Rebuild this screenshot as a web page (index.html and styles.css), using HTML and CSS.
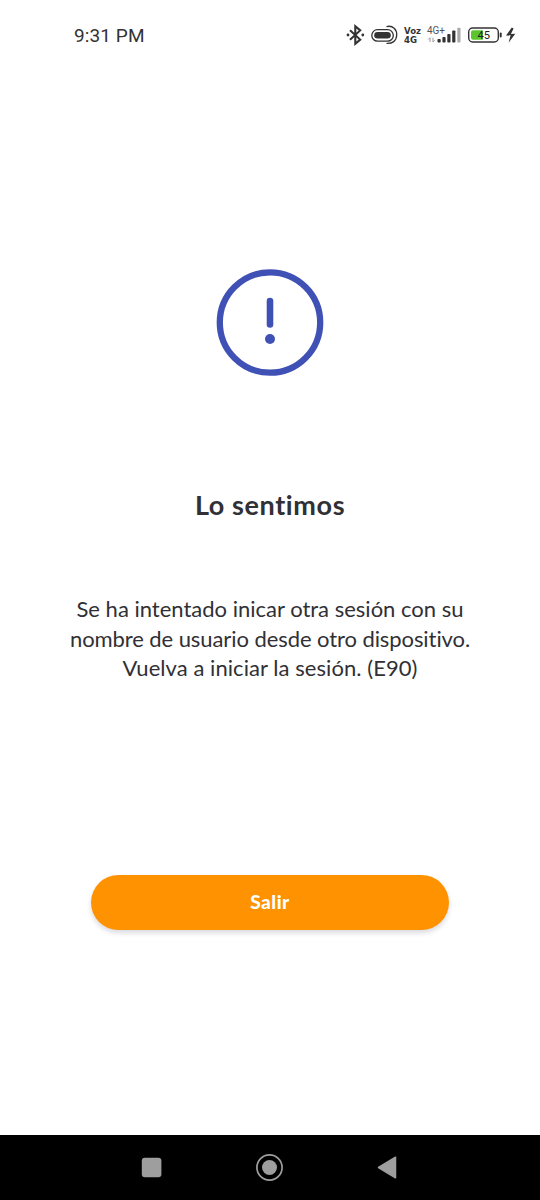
FILE: index.html
```html
<!DOCTYPE html>
<html lang="es">
<head>
<meta charset="utf-8">
<title>Lo sentimos</title>
<link rel="stylesheet" href="styles.css">
</head>
<body>
<div class="screen">
  <header class="status-bar">
    <span class="clock">9:31 PM</span>
    <svg class="status-icons" width="180" height="30" viewBox="340 20 180 30">
      <path d="M350 30.200l10.200 9.400-4.900 4.200V26.200l4.900 4.200-10.200 9.400" fill="none" stroke="#333" stroke-width="2.100"/>
      <circle cx="348" cy="35" r="1.400" fill="#333"/>
      <circle cx="362.800" cy="35" r="1.400" fill="#333"/>
      <rect x="371.800" y="29.700" width="21.500" height="11.400" rx="5.700" fill="none" stroke="#333" stroke-width="1.300"/>
      <rect x="374.200" y="32" width="16.600" height="6.600" rx="3.300" fill="#333"/>
      <path d="M386.500 26.600C393 24.900 397 30 396.700 35.200C396.400 41 392.400 43.800 386.500 43.400" fill="none" stroke="#333" stroke-width="1.300"/>
      <text class="voz" x="404" y="33.500" textLength="17" lengthAdjust="spacingAndGlyphs">Voz</text>
      <text class="voz" x="404" y="42.500" textLength="13" lengthAdjust="spacingAndGlyphs">4G</text>
      <text class="network" x="427" y="33.700" textLength="18" lengthAdjust="spacingAndGlyphs">4G+</text>
      <path d="M430 42v-4.200l-1.700 1.700M433 37.800V42l1.700-1.700" fill="none" stroke="#999" stroke-width="1"/>
      <g fill="#333">
        <rect x="437.500" y="39" width="3.200" height="3.500" rx=".8"/>
        <rect x="442.400" y="37" width="3.200" height="5.500" rx=".8"/>
        <rect x="447.300" y="34" width="3.200" height="8.500" rx=".8"/>
        <rect x="452.200" y="30.500" width="3.200" height="12" rx=".8"/>
        <rect x="457.300" y="27.800" width="3.200" height="14.700" rx=".8" fill="#aaa"/>
      </g>
      <rect x="468.700" y="28" width="29.600" height="14" rx="4" fill="#fff" stroke="#333" stroke-width="1.400"/>
      <path d="M473 30.300h9.800v9.400H473a2 2 0 0 1-2-2v-5.400a2 2 0 0 1 2-2z" fill="#5bc62c"/>
      <path d="M500.700 33.500v3" stroke="#333" stroke-width="2" stroke-linecap="round"/>
      <text class="battery" x="477.500" y="39.200" textLength="12.500" lengthAdjust="spacingAndGlyphs">45</text>
      <path d="M511.800 27.500l-5.800 8 4.600-.3-2 7.500 6.700-9-4.400.4 2.700-5.600z" fill="#333"/>
    </svg>
  </header>
  <main class="message">
    <svg class="alert" width="108" height="108" viewBox="0 0 108 108">
      <circle cx="54" cy="54.500" r="50.200" fill="none" stroke="#4051b5" stroke-width="6.300"/>
      <path d="M54 33v23.500" stroke="#4051b5" stroke-width="6.600" stroke-linecap="round"/>
      <circle cx="54" cy="71" r="5" fill="#4051b5"/>
    </svg>
    <h1 class="title">Lo sentimos</h1>
    <p class="description">
      <span class="line">Se ha intentado inicar otra sesión con su</span>
      <span class="line line-second">nombre de usuario desde otro dispositivo.</span>
      <span class="line line-third">Vuelva a iniciar la sesión. (E90)</span>
    </p>
    <button class="exit" type="button">Salir</button>
  </main>
  <nav class="nav-bar">
    <svg width="540" height="65" viewBox="0 1135 540 65">
      <rect x="141.800" y="1157.700" width="19.600" height="19.600" rx="3" fill="#9e9e9e"/>
      <circle cx="269.500" cy="1167.500" r="12.600" fill="none" stroke="#9e9e9e" stroke-width="1.700"/>
      <circle cx="269.500" cy="1167.500" r="7.500" fill="#9e9e9e"/>
      <path d="M378.500 1167.500l17-10.300v20.600z" fill="#9e9e9e" stroke="#9e9e9e" stroke-width="1.500" stroke-linejoin="round"/>
    </svg>
  </nav>
</div>
</body>
</html>
```
FILE: styles.css
```css
body {
  margin: 0;
  background: #fff;
}

.screen {
  display: flex;
  flex-direction: column;
  height: 1200px;
  width: 540px;
}

.status-bar {
  display: flex;
  justify-content: space-between;
  box-sizing: border-box;
  height: 70px;
  padding: 20px 20px 0 74px;
}

.clock {
  font: 400 19px/31px Roboto, sans-serif;
  letter-spacing: 0.1px;
  color: #333;
}

.voz {
  font: 700 8px "DejaVu Sans", sans-serif;
  fill: #333;
}

.network {
  font: 10px Roboto, sans-serif;
  fill: #555;
}

.battery {
  font: 400 11px Roboto, sans-serif;
  fill: #222;
}

.message {
  display: flex;
  flex: 1;
  flex-direction: column;
  align-items: center;
  padding-top: 198px;
  color: #303035;
  font-family: Lato, sans-serif;
  font-variant-ligatures: none;
}

.alert {
  display: block;
}

.title {
  margin: 111px 0 0;
  font-size: 27px;
  font-weight: 700;
  line-height: 36px;
  letter-spacing: 0.6px;
}

.description {
  margin: 71px 0 0;
  font-size: 22px;
  line-height: 29.5px;
  text-align: center;
}

.line {
  display: block;
  white-space: nowrap;
}

.line-second {
  letter-spacing: -0.08px;
}

.line-third {
  letter-spacing: 0.06px;
}

.exit {
  width: 358px;
  height: 55px;
  margin-top: 192px;
  padding: 0 0 2px;
  border: 0;
  border-radius: 28px;
  background: #ff9200;
  box-shadow: 0 3px 5px rgba(40, 40, 80, 0.17);
  color: #fff;
  font: 900 19px/53px Lato, sans-serif;
  letter-spacing: 0.5px;
}

.nav-bar {
  height: 65px;
  background: #000;
}

.nav-bar svg {
  display: block;
}
```
